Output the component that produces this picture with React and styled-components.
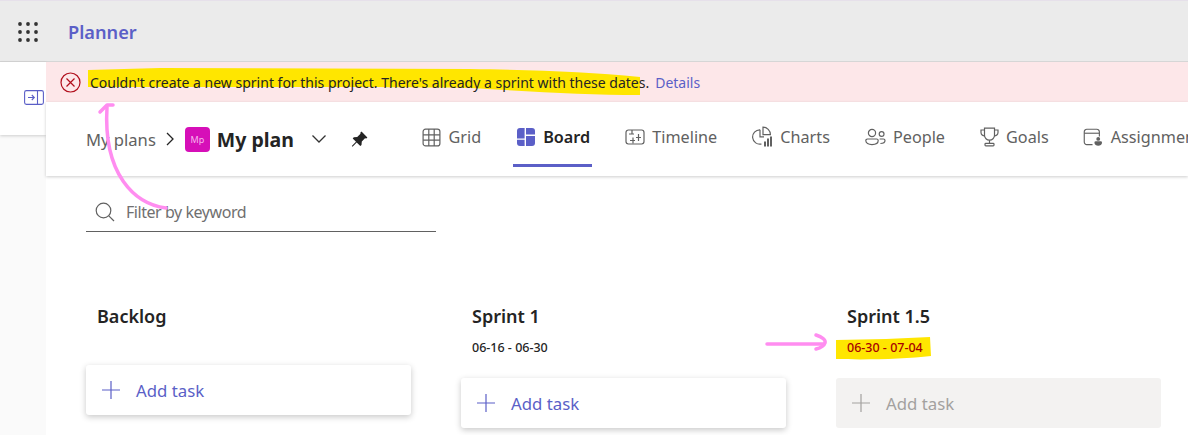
import React from 'react';
import styled, { createGlobalStyle } from 'styled-components';

const GlobalStyle = createGlobalStyle`
	html, body {
		margin: 0;
		padding: 0;
		background: #fafafa;
		font-family: "Noto Sans", "Open Sans", sans-serif;
	}
`;

// Tab icons
const GridIcon = () => (
	<svg width="19" height="19" viewBox="0 0 19 19" fill="none" stroke="#616161" strokeWidth="1.2">
		<rect x="1.1" y="1.1" width="16.8" height="16.8" rx="2.5" />
		<path d="M6.8 1.1v16.8M12.2 1.1v16.8M1.1 6.8h16.8M1.1 12.2h16.8" />
	</svg>
);

const BoardIcon = () => (
	<svg width="20" height="20" viewBox="0 0 20 20" fill="#5b5fc7">
		<path d="M4 1h4.600v10.400H1V4a3 3 0 0 1 3-3z" />
		<path d="M10 1h6a3 3 0 0 1 3 3v3.600h-9z" />
		<path d="M10 9h9v7a3 3 0 0 1-3 3h-6z" />
		<path d="M1 12.800h7.600V19H4a3 3 0 0 1-3-3z" />
	</svg>
);

const TimelineIcon = () => (
	<svg width="20" height="18" viewBox="0 0 20 18" fill="none" stroke="#616161" strokeWidth="1.2">
		<rect x="1" y="2" width="18" height="14" rx="2.400" />
		<path d="M4 6h5M7 2v4M11 9.500h5M13.500 6v7M5 12.500h5M8 9.500v6" />
	</svg>
);

const ChartsIcon = () => (
	<svg width="21" height="22" viewBox="0 0 21 22" fill="none" stroke="#616161" strokeWidth="1.2">
		<path d="M8 3.800a7.200 7.200 0 1 0 1.500 14.200" />
		<path d="M11 1.200a7.400 7.400 0 0 1 7.400 7.400H11z" />
		<path d="M8 3.800v7h4" />
		<path d="M13 20.500v-5M16 20.500v-8M19 20.500v-10" strokeWidth="2" />
	</svg>
);

const PeopleIcon = () => (
	<svg width="21" height="18" viewBox="0 0 21 18" fill="none" stroke="#616161" strokeWidth="1.2">
		<circle cx="7" cy="5" r="3.600" />
		<circle cx="16.600" cy="6" r="2.400" />
		<path d="M2.400 11h9.200a1.600 1.600 0 0 1 1.600 1.600c0 2.600-2.600 4-6.200 4S.8 15.200.8 12.600A1.600 1.600 0 0 1 2.400 11z" />
		<path d="M14.600 11h3.800a1.600 1.600 0 0 1 1.600 1.600c0 1.800-1.800 2.900-4.600 2.900" />
	</svg>
);

const GoalsIcon = () => (
	<svg width="19" height="20" viewBox="0 0 19 20" fill="none" stroke="#616161" strokeWidth="1.2">
		<path d="M4.500 1.200h10v7a5 5 0 0 1-10 0z" />
		<path d="M4.500 3H1v2.500a3.600 3.600 0 0 0 3.800 3.500M14.500 3H18v2.500A3.600 3.600 0 0 1 14.200 9" />
		<path d="M9.500 13.200v3" />
		<rect x="5" y="16.400" width="9" height="2.400" rx=".8" />
	</svg>
);

const AssignmentsIcon = () => (
	<svg width="20" height="19" viewBox="0 0 21 20" fill="none" stroke="#616161" strokeWidth="1.2">
		<path d="M10 17.500H4a2.700 2.700 0 0 1-2.700-2.700V4A2.700 2.700 0 0 1 4 1.300h10.500A2.700 2.700 0 0 1 17.200 4v5" />
		<path d="M1.300 5.500h15.900" />
		<circle cx="16" cy="11.500" r="2" fill="#616161" stroke="none" />
		<path d="M12 15.500a1.500 1.500 0 0 1 1.500-1.500h5a1.500 1.500 0 0 1 1.500 1.500c0 2-2 3.200-4 3.200s-4-1.200-4-3.200z" fill="#616161" stroke="none" />
	</svg>
);

const tabs = [
	{ label: 'Grid', icon: <GridIcon /> },
	{ label: 'Board', icon: <BoardIcon />, active: true },
	{ label: 'Timeline', icon: <TimelineIcon /> },
	{ label: 'Charts', icon: <ChartsIcon /> },
	{ label: 'People', icon: <PeopleIcon /> },
	{ label: 'Goals', icon: <GoalsIcon /> },
	{ label: 'Assignments', icon: <AssignmentsIcon /> },
];

const columns = [
	{ title: 'Backlog' },
	{ title: 'Sprint 1', dates: '06-16 - 06-30' },
	{ title: 'Sprint 1.5', dates: '06-30 - 07-04', invalid: true },
];

const AddTask = ({ disabled }) => (
	<AddCard disabled={disabled}>
		<svg width="20" height="20" viewBox="0 0 20 20" stroke="currentColor" strokeWidth="1.2">
			<path d="M10 1v18M1 10h18" />
		</svg>
		<span>Add task</span>
	</AddCard>
);

/**
 * Planner board page
 */
const App = () => (
	<Page>
		<GlobalStyle />
		<TopBar>
			<svg width="20" height="20" viewBox="0 0 20 20" fill="#333">
				{[2, 10, 18].map(y =>
					[2, 10, 18].map(x => <circle key={`${x}-${y}`} cx={x} cy={y} r="1.9" />)
				)}
			</svg>
			<AppName>Planner</AppName>
		</TopBar>
		<Body>
			<SideRail>
				<svg width="20" height="15" viewBox="0 0 20 15" fill="none" stroke="#5b5fc7" strokeWidth="1.1">
					<rect x=".6" y=".6" width="18.800" height="13.800" rx="1.800" />
					<path d="M13.500 .6v13.800M4 7.500h6M7.800 5l2.500 2.500L7.800 10" />
				</svg>
			</SideRail>
			<Main>
				<Banner>
					<svg width="21" height="21" viewBox="0 0 21 21" fill="none" stroke="#b10e1c" strokeWidth="1.200">
						<circle cx="10.500" cy="10.500" r="9.500" />
						<path d="M6.500 6.500l8 8M14.500 6.500l-8 8" />
					</svg>
					<BannerText>Couldn't create a new sprint for this project. There's already a sprint with these dates.</BannerText>
					<BannerLink>Details</BannerLink>
					<Highlight width="552" height="30" viewBox="0 0 552 30">
						<path d="M0 4L72 2L382 3C450 4 500 6 552 11L552 29C500 29 450 26 382 22C300 21 200 21 0 21z" fill="#ffe600" />
					</Highlight>
				</Banner>
				<Header>
					<Crumbs>
						<CrumbLink>My plans</CrumbLink>
						<svg width="10" height="16" viewBox="0 0 10 16" fill="none" stroke="#242424" strokeWidth="1.300">
							<path d="M2 2l6 6-6 6" />
						</svg>
						<PlanTile>Mp</PlanTile>
						<PlanName>My plan</PlanName>
						<svg width="16" height="10" viewBox="0 0 16 10" fill="none" stroke="#333" strokeWidth="1.300">
							<path d="M1.500 1.500L8 8l6.500-6.500" />
						</svg>
						<PinWrap>
							<svg width="17" height="17" viewBox="0 0 17 17" fill="#242424">
								<path d="M10.500 .6L16.400 6.500 15.300 7.600 14 7.300 10.800 10.500 10.500 13.900 9.300 15 5.700 11.400 1.500 15.800 .8 15.100 5 10.800 1.700 7.500 2.800 6.300 6.200 6 9.500 2.800 9.300 1.700z" />
							</svg>
						</PinWrap>
					</Crumbs>
					<TabList>
						{tabs.map(tab => (
							<Tab key={tab.label} active={tab.active}>
								{tab.icon}
								<span>{tab.label}</span>
							</Tab>
						))}
					</TabList>
				</Header>
				<Content>
					<Filter>
						<svg width="20" height="20" viewBox="0 0 20 20" fill="none" stroke="#616161" strokeWidth="1.200">
							<circle cx="8.500" cy="8.500" r="7.300" />
							<path d="M13.800 13.800l5.200 5.200" />
						</svg>
						<span>Filter by keyword</span>
					</Filter>
					<Board>
						{columns.map(col => (
							<Column key={col.title}>
								<ColumnTitle>{col.title}</ColumnTitle>
								<DateLine empty={!col.dates}>
									{col.dates && (
										<Dates invalid={col.invalid}>
											{col.invalid && (
												<DateMark width="95" height="23" viewBox="0 0 95 23">
													<path d="M0 3L50 2L94 0L95 19C70 22 30 23 0 22z" fill="#ffe600" />
												</DateMark>
											)}
											{col.dates}
										</Dates>
									)}
								</DateLine>
								<AddTask disabled={col.invalid} />
							</Column>
						))}
					</Board>
				</Content>
			</Main>
		</Body>
		<Annotation width="1188" height="435" viewBox="0 0 1188 435" fill="none" stroke="#ff8df0" strokeWidth="3.500" strokeLinecap="round" strokeLinejoin="round">
			<path d="M166 208C135 204 103 175 107 107" />
			<path d="M100 112L107 105L113 105" />
			<path d="M767 344H824" />
			<path d="M816 335C822 337 826 340 825 343C824 346 820 348 816 349" />
		</Annotation>
	</Page>
);

/**
 * Styled components
 */
const Page = styled.div`
	position: relative;
	width: 1188px;
	height: 435px;
	overflow: hidden;
	background: #fafafa;
`;

const TopBar = styled.header`
	display: flex;
	align-items: center;
	gap: 30px;
	box-sizing: border-box;
	height: 62px;
	padding: 2px 0 0 18px;
	background: #ebebeb;
	border-top: 1px solid #e6e0ea;
	border-bottom: 1px solid #d6d6d6;
`;

const AppName = styled.div`
	font-size: 18.200px;
	font-weight: 600;
	color: #5b5fc7;
`;

const Body = styled.div`
	display: flex;
	align-items: flex-start;
`;

const SideRail = styled.nav`
	box-sizing: border-box;
	width: 46px;
	height: 73px;
	padding: 26px 0 0 24px;
	background: #fff;
	box-shadow: 0 1px 3px rgba(0, 0, 0, 0.18);
`;

const Main = styled.main`
	position: relative;
	flex: 1;
	min-width: 0;
	height: 373px;
	background: #fff;
`;

const Banner = styled.div`
	position: relative;
	display: flex;
	align-items: center;
	box-sizing: border-box;
	height: 40px;
	padding: 0 0 0 14px;
	background: #fde7e9;
	font-size: 14px;
`;

const BannerText = styled.span`
	position: relative;
	z-index: 1;
	margin-left: 9px;
	color: #242424;
`;

const BannerLink = styled.span`
	position: relative;
	z-index: 1;
	margin-left: 6px;
	color: #5b5fc7;
`;

const Highlight = styled.svg`
	position: absolute;
	left: 42px;
	top: 4px;
`;

const Header = styled.div`
	position: relative;
	z-index: 2;
	display: flex;
	align-items: stretch;
	box-sizing: border-box;
	height: 74px;
	padding-left: 40px;
	background: #fff;
	box-shadow: 0 1px 3px rgba(0, 0, 0, 0.2);
	white-space: nowrap;
`;

const Crumbs = styled.div`
	display: flex;
	align-items: center;
	width: 336px;
	flex: none;
`;

const CrumbLink = styled.span`
	margin-right: 9px;
	font-size: 16.600px;
	color: #616161;
`;

const PlanTile = styled.span`
	display: flex;
	align-items: center;
	justify-content: center;
	width: 25px;
	height: 25px;
	margin: 0 7px 0 10px;
	border-radius: 4px;
	background: #d60fb8;
	color: #f6b6ec;
	font-size: 9px;
`;

const PlanName = styled.span`
	margin-right: 17px;
	font-size: 19.500px;
	font-weight: 700;
	color: #242424;
`;

const PinWrap = styled.span`
	display: flex;
	margin-left: 24px;
`;

const TabList = styled.div`
	display: flex;
	gap: 34.600px;
	padding-bottom: 4px;
`;

const Tab = styled.div`
	position: relative;
	display: flex;
	align-items: center;
	gap: 7.500px;
	font-size: 16.200px;
	font-weight: ${props => (props.active ? 600 : 400)};
	color: ${props => (props.active ? '#242424' : '#616161')};

	&::after {
		content: '';
		display: ${props => (props.active ? 'block' : 'none')};
		position: absolute;
		left: -3px;
		right: -2px;
		bottom: 5px;
		height: 3px;
		background: #5b5fc7;
	}
`;

const Content = styled.div`
	padding: 26px 0 0 40px;
`;

const Filter = styled.div`
	display: flex;
	align-items: center;
	gap: 11px;
	box-sizing: border-box;
	width: 350px;
	height: 30px;
	padding: 0 0 10px 9px;
	border-bottom: 1px solid #616161;
	font-size: 16px;
	letter-spacing: -0.45px;
	color: #707070;
`;

const Board = styled.div`
	display: flex;
	gap: 50px;
	padding-top: 71px;
`;

const Column = styled.section`
	flex: none;
	width: 325px;
`;

const ColumnTitle = styled.div`
	height: 28px;
	padding-left: 11px;
	font-size: 18px;
	font-weight: 600;
	line-height: 26px;
	color: #242424;
`;

const DateLine = styled.div`
	display: flex;
	align-items: center;
	box-sizing: border-box;
	height: 30px;
	margin-bottom: ${props => (props.empty ? 4 : 17)}px;
	padding: 2px 0 0 11px;
`;

const Dates = styled.span`
	position: relative;
	z-index: 0;
	font-size: 12.500px;
	font-weight: 500;
	color: ${props => (props.invalid ? '#a80000' : '#242424')};
`;

const DateMark = styled.svg`
	position: absolute;
	left: -11px;
	top: -2px;
	z-index: -1;
`;

const AddCard = styled.div`
	display: flex;
	align-items: center;
	gap: 15px;
	box-sizing: border-box;
	height: 50px;
	padding-left: 15px;
	border-radius: 3px;
	font-size: 16.800px;
	color: ${props => (props.disabled ? '#a3a19f' : '#5b5fc7')};
	background: ${props => (props.disabled ? '#f3f2f1' : '#fff')};
	box-shadow: ${props => (props.disabled ? 'none' : '0 2px 6px rgba(0, 0, 0, 0.22)')};
`;

const Annotation = styled.svg`
	position: absolute;
	left: 0;
	top: 0;
	z-index: 5;
	pointer-events: none;
`;

export default App;
